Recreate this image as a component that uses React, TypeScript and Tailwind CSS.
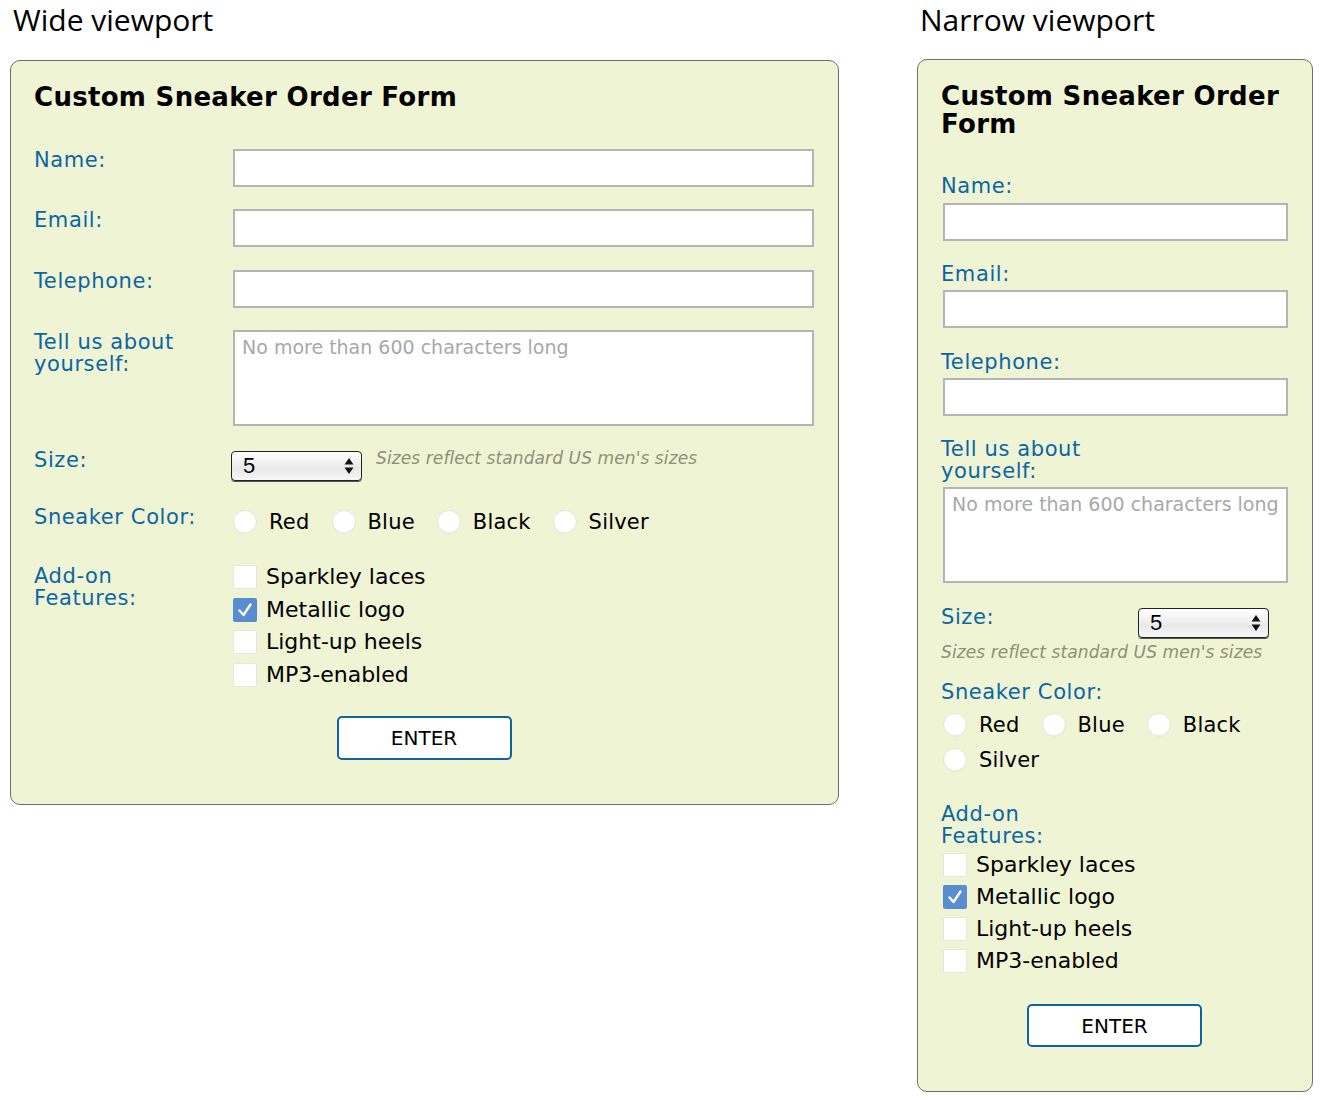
import React from "react";

const F = { fontFamily: '"DejaVu Sans", Verdana, sans-serif' };

function TextBox({ narrow }: { narrow?: boolean }) {
  return <div className={`h-[38px] border-2 border-[#b4b4b4] bg-white ${narrow ? "ml-[2px] w-[345px]" : "w-full"}`} />;
}

function TextArea({ narrow }: { narrow?: boolean }) {
  return (
    <div className={`h-[96px] border-2 border-[#b4b4b4] bg-white pl-[7px] pt-[3px] text-[19px] leading-[24px] text-[#a8a8a8] ${narrow ? "ml-[2px] w-[345px]" : "w-full"}`}>
      No more than 600 characters long
    </div>
  );
}

function Select() {
  return (
    <div className="flex h-[30px] w-[131px] items-center justify-between rounded-[4px] border border-[#222] bg-[linear-gradient(#ffffff,#e9e9e9_60%,#f7f7f7)] pl-[11px] pr-[7px] shadow-[0_1px_0_#555]">
      <span className="text-[22px] leading-[22px] text-black" style={{ fontFamily: '"Liberation Sans", Arial, sans-serif' }}>5</span>
      <svg width="10" height="18" viewBox="0 0 10 18">
        <path d="M5 1 L9.5 7.5 L0.5 7.5 Z" fill="#111" />
        <path d="M5 17 L9.5 10.5 L0.5 10.5 Z" fill="#111" />
      </svg>
    </div>
  );
}

function Radio({ label }: { label: string }) {
  return (
    <div className="flex items-center gap-[12px]">
      <span className="block h-[24px] w-[24px] rounded-full border border-[#e4e6da] bg-white shadow-[inset_0_-1px_1px_rgba(0,0,0,0.08)]" />
      <span className="text-[21px] leading-[24px] tracking-[0.2px] text-black">{label}</span>
    </div>
  );
}

function Check({ label, checked, h }: { label: string; checked?: boolean; h: string }) {
  return (
    <div className={`flex items-center gap-[9px] ${h}`}>
      {checked ? (
        <span className="flex h-[24px] w-[24px] items-center justify-center rounded-[2px] bg-[#5a8dcf]">
          <svg width="18" height="18" viewBox="0 0 18 18">
            <path d="M3.5 9.5 L7.5 14 L14.5 3.5" fill="none" stroke="#fff" strokeWidth="2.4" strokeLinecap="round" strokeLinejoin="round" />
          </svg>
        </span>
      ) : (
        <span className="block h-[24px] w-[24px] rounded-[2px] border border-[#e6e8dc] bg-white" />
      )}
      <span className="text-[22px] leading-[24px] text-black">{label}</span>
    </div>
  );
}

function EnterButton({ h }: { h: string }) {
  return (
    <div className="flex justify-center">
      <div className={`flex ${h} w-[175px] items-center justify-center rounded-[5px] border-2 border-[#0e64a0] bg-white text-[20px] text-black`}>
        ENTER
      </div>
    </div>
  );
}

const labelCls = "text-[21px] leading-[22px] tracking-[0.6px] text-[#0b66a3]";
const hintCls = "text-[17px] leading-[20px] italic tracking-[0.1px] text-[#8c9078]";
const titleCls = "text-[26px] font-bold leading-[28px] tracking-[0.3px] text-black";

function WideForm() {
  return (
    <div className="w-[829px] rounded-[10px] border border-[#6d6d6d] bg-[#eff4d5] pb-[44px] pl-[23px] pr-[24px] pt-[22px]">
      <h2 className={titleCls}>Custom Sneaker Order Form</h2>
      <div className="mt-[38px] flex">
        <div className={`w-[199px] ${labelCls}`}>Name:</div>
        <div className="flex-1"><TextBox /></div>
      </div>
      <div className="mt-[22px] flex">
        <div className={`w-[199px] ${labelCls}`}>Email:</div>
        <div className="flex-1"><TextBox /></div>
      </div>
      <div className="mt-[23px] flex">
        <div className={`w-[199px] ${labelCls}`}>Telephone:</div>
        <div className="flex-1"><TextBox /></div>
      </div>
      <div className="mt-[22px] flex">
        <div className={`w-[199px] pt-[1px] ${labelCls}`}>Tell us about<br />yourself:</div>
        <div className="flex-1"><TextArea /></div>
      </div>
      <div className="mt-[25px] flex items-start">
        <div className={`w-[197px] -mt-[2px] ${labelCls}`}>Size:</div>
        <Select />
        <div className={`ml-[14px] -mt-[3px] ${hintCls}`}>Sizes reflect standard US men's sizes</div>
      </div>
      <div className="mt-[29px] flex items-start">
        <div className={`w-[199px] -mt-[4px] ${labelCls}`}>Sneaker Color:</div>
        <div className="flex gap-x-[22px]">
          <Radio label="Red" />
          <Radio label="Blue" />
          <Radio label="Black" />
          <Radio label="Silver" />
        </div>
      </div>
      <div className="mt-[27px] flex items-start">
        <div className={`w-[199px] pt-[4px] ${labelCls}`}>Add-on<br />Features:</div>
        <div className="flex flex-col">
          <Check label="Sparkley laces" h="h-[32.5px]" />
          <Check label="Metallic logo" checked h="h-[32.5px]" />
          <Check label="Light-up heels" h="h-[32.5px]" />
          <Check label="MP3-enabled" h="h-[32.5px]" />
        </div>
      </div>
      <div className="mt-[25px]">
        <EnterButton h="h-[44px]" />
      </div>
    </div>
  );
}

function NarrowForm() {
  return (
    <div className="w-[396px] rounded-[10px] border border-[#6d6d6d] bg-[#eff4d5] pb-[44px] pl-[23px] pr-[24px] pt-[22px]">
      <h2 className={titleCls}>Custom Sneaker Order Form</h2>
      <div className={`mt-[37px] ${labelCls}`}>Name:</div>
      <div className="mt-[6px]"><TextBox narrow /></div>
      <div className={`mt-[22px] ${labelCls}`}>Email:</div>
      <div className="mt-[5px]"><TextBox narrow /></div>
      <div className={`mt-[23px] ${labelCls}`}>Telephone:</div>
      <div className="mt-[5px]"><TextBox narrow /></div>
      <div className={`mt-[22px] ${labelCls}`}>Tell us about<br />yourself:</div>
      <div className="mt-[5px]"><TextArea narrow /></div>
      <div className="mt-[23px] flex items-start">
        <div className={`w-[197px] ${labelCls}`}>Size:</div>
        <div className="mt-[2px]"><Select /></div>
      </div>
      <div className={`mt-[4px] ${hintCls}`}>Sizes reflect standard US men's sizes</div>
      <div className={`mt-[19px] ${labelCls}`}>Sneaker Color:</div>
      <div className="ml-[2px] mt-[10px] flex flex-wrap gap-x-[22px] gap-y-[11px]">
        <Radio label="Red" />
        <Radio label="Blue" />
        <Radio label="Black" />
        <Radio label="Silver" />
      </div>
      <div className={`mt-[31px] ${labelCls}`}>Add-on<br />Features:</div>
      <div className="ml-[2px] mt-[2px] flex flex-col">
        <Check label="Sparkley laces" h="h-[32px]" />
        <Check label="Metallic logo" checked h="h-[32px]" />
        <Check label="Light-up heels" h="h-[32px]" />
        <Check label="MP3-enabled" h="h-[32px]" />
      </div>
      <div className="mt-[27px]">
        <EnterButton h="h-[43px]" />
      </div>
    </div>
  );
}

export default function App() {
  return (
    <div className="min-h-[1100px] w-[1321px] bg-white" style={F}>
      <div className="flex items-start">
        <div className="ml-[10px] w-[829px]">
          <div className="h-[40px] pl-[3px] text-[30px] leading-[40px] text-black" style={{ fontFamily: '"Open Sans", "Noto Sans", sans-serif' }}>Wide viewport</div>
          <div className="mt-[20px]"><WideForm /></div>
        </div>
        <div className="ml-[78px] w-[396px]">
          <div className="h-[40px] pl-[3px] text-[30px] leading-[40px] text-black" style={{ fontFamily: '"Open Sans", "Noto Sans", sans-serif' }}>Narrow viewport</div>
          <div className="mt-[19px]"><NarrowForm /></div>
        </div>
      </div>
    </div>
  );
}
